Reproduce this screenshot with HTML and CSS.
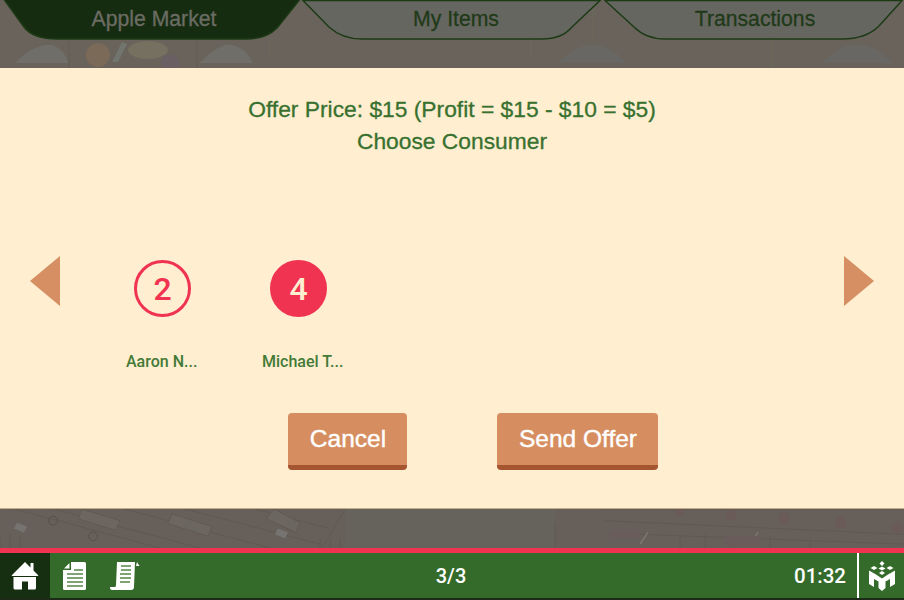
FILE: index.html
```html
<!DOCTYPE html>
<html lang="en">
<head>
    <meta charset="UTF-8">
    <title>Apple Market</title>
    <link rel="stylesheet" href="styles.css">
</head>
<body>
    <div class="screen">
        <div class="top-band">
            <!-- faded market stall behind the tabs -->
            <svg class="scenery" viewBox="0 0 904 68" preserveAspectRatio="none">
                <path d="M15 63Q30 47 45 45H52Q62 47 69 63Z" fill="#706e69"/>
                <path d="M200 63Q215 47 226 45H232Q245 47 253 63Z" fill="#706e69"/>
                <path d="M558 63Q575 46 590 45H596Q612 47 627 63Z" fill="#696763"/>
                <path d="M822 63Q840 46 852 45H860Q878 47 892 63Z" fill="#696763"/>
                <circle cx="98" cy="55" r="12" fill="#7c6a58"/>
                <path d="M112 62L122 42L127 44L118 62Z" fill="#72756d"/>
                <ellipse cx="148" cy="50" rx="20" ry="9" fill="#75705f"/>
                <circle cx="170" cy="63" r="9" fill="#6a5f63"/>
                <path d="M69 40V68M197 40V68" stroke="#625d55" stroke-width="1"/>
                <path d="M270 40V56M531 0V56M593 0V40M772 0V68" stroke="#6d6a58" stroke-width="1"/>
            </svg>
            <nav class="tabs">
                <a class="tab tab-active">
                    <svg class="tab-shape" viewBox="0 0 304 40"><path d="M3 -2L24 27Q33 39 57 39H247Q266 39 277 28L301 -2Z"/></svg>
                    <span class="tab-label">Apple Market</span>
                </a>
                <a class="tab">
                    <svg class="tab-shape" viewBox="0 0 304 40"><path d="M1 0.5H298L270 27Q260 39 240 39H60Q40 39 27 27Z"/></svg>
                    <span class="tab-label">My Items</span>
                </a>
                <a class="tab">
                    <svg class="tab-shape" viewBox="0 0 304 40"><path d="M1 0.5H298L275 26Q262 39 238 39H61Q42 39 30 27Z"/></svg>
                    <span class="tab-label">Transactions</span>
                </a>
            </nav>
        </div>

        <main class="dialog">
            <div class="dialog-title">
                <p>Offer Price: $15 (Profit = $15 - $10 = $5)</p>
                <p>Choose Consumer</p>
            </div>
            <div class="picker">
                <div class="arrow arrow-left"></div>
                <ul class="consumers">
                    <li class="consumer">
                        <span class="badge">2</span>
                        <span class="consumer-name">Aaron N...</span>
                    </li>
                    <li class="consumer">
                        <span class="badge badge-on">4</span>
                        <span class="consumer-name">Michael T...</span>
                    </li>
                </ul>
                <div class="arrow arrow-right"></div>
            </div>
            <div class="actions">
                <button class="btn btn-cancel">Cancel</button>
                <button class="btn btn-send">Send Offer</button>
            </div>
        </main>

        <div class="bottom-band">
            <!-- faded wooden planks -->
            <svg class="scenery" viewBox="0 0 904 40" preserveAspectRatio="none">
                <path d="M345 0H555V40H345Z" fill="#66635c"/>
                <g fill="none" stroke="#5f5952" stroke-width="1">
                    <path d="M0 -4L160 40M40 -4L200 40M110 -4L270 40M170 -4L320 36M240 -4L330 20M345 0L322 40"/>
                    <path d="M0 28V40M10 26V40M20 28V40M320 30V40M330 30V40M340 30V40"/>
                    <path d="M555 14V40M600 0H904M605 12L904 26M640 26L904 36M680 26V40M705 26V40M730 28V40M770 28V40M810 30V40"/>
                </g>
                <g fill="#6c6660" stroke="#5f5952">
                    <path d="M82 0L120 12L116 22L78 10Z"/>
                    <path d="M172 5L212 18L208 28L168 15Z"/>
                    <path d="M274 0L300 14L296 24L266 10Z"/>
                </g>
                <path d="M17 14L27 18L24 24L14 20Z M278 20L288 24L285 30L275 26Z" fill="#767470"/>
                <path d="M640 36L648 24M750 36L758 24" stroke="#7d7671" stroke-width="1.5"/>
                <path d="M610 22H640V30H610Z M725 28H760V38H725Z" fill="#6a5c5b"/>
                <g fill="none" stroke="#55504a">
                    <circle cx="53" cy="12" r="4.5"/>
                    <circle cx="93" cy="28" r="4.5"/>
                </g>
                <g fill="#6a5b58">
                    <circle cx="679" cy="3" r="5"/>
                    <circle cx="731" cy="6" r="6"/>
                    <circle cx="784" cy="9" r="6"/>
                    <circle cx="841" cy="14" r="6"/>
                    <circle cx="897" cy="19" r="6"/>
                </g>
            </svg>
        </div>

        <footer class="statusbar">
            <div class="nav-icons">
                <a class="nav-icon nav-icon-home">
                    <svg width="28" height="30" viewBox="0 0 28 30"><path fill="#fff" d="M14 1L19.500 6.500V2H22.500V9.500L27.500 14.500L26.500 15H1.500L0.500 14.500ZM2.500 16H25V27Q25 28.500 23.500 28.500H17V20.500H11V28.500H4Q2.500 28.500 2.500 27Z"/></svg>
                </a>
                <a class="nav-icon">
                    <svg width="24" height="30" viewBox="0 0 24 30"><path fill="#fff" d="M8 1H21.500Q23 1 23 2.500V27.500Q23 29 21.500 29H1.500Q0 29 0 27.500V9H8Z"/><path fill="#fff" d="M6.500 2V7.500H1Z"/><path stroke="#7fa374" stroke-width="2" d="M11 9H20M4 13H20M4 17H20M4 21H20M4 25H20"/></svg>
                </a>
                <a class="nav-icon">
                    <svg width="30" height="30" viewBox="0 0 30 30"><path fill="#fff" d="M7 1H25L24 26Q24 29 21 29H2Q0 29 0 26H5Q6 26 6 24Z"/><path fill="#fff" d="M26 5L27 1L29.500 5Z"/><path stroke="#7fa374" stroke-width="2" d="M11 5H21M11 9H21M10 13H21M10 17H21M10 21H20"/></svg>
                </a>
            </div>
            <div class="page-count">3/3</div>
            <div class="clock">01:32</div>
            <div class="logo">
                <svg width="26" height="30" viewBox="0 0 26 30"><path fill="#fff" d="M13 0L15.500 2.500L13 5L10.500 2.500ZM5 5L8.500 7L5 9L1.500 7ZM21 5L24.500 7L21 9L17.500 7ZM13 5.500L16.500 7.500L13 9.500L9.500 7.500ZM13 10L16 12L13 14L10 12ZM0 9.500L7 13.500L13 17.500L19 13.500L26 9.500V23L21 26V18L16.500 20.500V27L13 30L9.500 27V20.500L5 18V26L0 23Z"/></svg>
            </div>
        </footer>
    </div>
</body>
</html>
```

FILE: styles.css
```css
* {
    box-sizing: border-box;
}

html, body {
    margin: 0;
    height: 100%;
    overflow: hidden;
}

body {
    font-family: 'Liberation Sans', Arial, sans-serif;
    background-color: #67615b;
}

.screen {
    display: flex;
    flex-direction: column;
    height: 600px;
}

/* Bandes de fond */
.top-band {
    position: relative;
    height: 68px;
    background-color: #69635c;
}

.bottom-band {
    position: relative;
    height: 40px;
    background-color: #67605a;
    border-top: 1px solid #c2ad90;
}

.scenery {
    position: absolute;
    top: 0;
    left: 0;
    width: 100%;
    height: 100%;
}

/* Onglets */
.tabs {
    position: relative;
    display: flex;
    height: 40px;
}

.tab {
    position: relative;
    display: flex;
    flex: none;
    justify-content: center;
    align-items: center;
    width: 302px;
    height: 40px;
    padding-bottom: 3px;
    font-size: 21.2px;
    -webkit-text-stroke: 0.3px;
    color: #1f3a18;
}

.tab:last-child {
    width: 296px;
}

.tab-shape {
    position: absolute;
    top: 0;
    left: 0;
    width: 304px;
    height: 40px;
}

.tab-shape path {
    fill: #666661;
    stroke: #1c3b15;
    stroke-width: 1.5;
}

.tab-active {
    color: #6b6c63;
}

.tab-active .tab-shape path {
    fill: #162c10;
}

.tab-label {
    position: relative;
    left: 3px;
}

/* Fenetre */
.dialog {
    display: flex;
    flex-direction: column;
    height: 440px;
    padding-top: 25px;
    background-color: #ffeecf;
    color: #38712f;
}

.dialog-title {
    height: 167px;
    text-align: center;
    font-size: 22.8px;
    line-height: 32px;
    -webkit-text-stroke: 0.3px;
}

.dialog-title p {
    margin: 0;
}

.picker {
    display: flex;
    align-items: flex-start;
    height: 153px;
    padding-left: 30px;
    padding-right: 30px;
}

.arrow {
    width: 0;
    height: 0;
    margin-top: -4px;
    border-top: 25px solid transparent;
    border-bottom: 25px solid transparent;
}

.arrow-left {
    border-right: 30px solid #d58f62;
}

.arrow-right {
    border-left: 30px solid #d58f62;
}

.consumers {
    display: flex;
    flex: 1;
    gap: 36px;
    margin: 0;
    padding: 0 0 0 66px;
    list-style: none;
}

.consumer {
    display: flex;
    flex-direction: column;
    align-items: flex-start;
    width: 100px;
}

.badge {
    display: flex;
    justify-content: center;
    align-items: center;
    width: 57px;
    height: 57px;
    margin-left: 8px;
    border: 3px solid #f03350;
    border-radius: 50%;
    font-family: Roboto, sans-serif;
    font-size: 32px;
    font-weight: 500;
    color: #f03350;
}

.badge-on {
    background-color: #f03350;
    color: #ffeecf;
}

.consumer-name {
    margin-top: 36px;
    font-family: Roboto, sans-serif;
    font-size: 16px;
    font-weight: 500;
    line-height: 18px;
    color: #437a38;
    white-space: nowrap;
}

.actions {
    display: flex;
    gap: 90px;
    padding-left: 288px;
}

.btn {
    height: 57px;
    padding: 0 0 0 1px;
    border: none;
    border-radius: 4px;
    border-bottom: 5px solid #a5552f;
    background-color: #d68e60;
    color: #fff;
    font-family: 'Liberation Sans', Arial, sans-serif;
    font-size: 24.500px;
    -webkit-text-stroke: 0.4px;
}

.btn-cancel {
    width: 119px;
}

.btn-send {
    width: 161px;
}

/* Barre du bas */
.statusbar {
    display: flex;
    align-items: center;
    height: 52px;
    border-top: 5px solid #f03350;
    border-bottom: 2px solid #1c2a17;
    background-color: #346b2a;
    color: #fff;
    font-family: Roboto, sans-serif;
}

.nav-icons {
    display: flex;
    align-items: center;
    width: 400px;
    height: 100%;
}

.nav-icon {
    display: flex;
    justify-content: center;
    align-items: center;
    width: 50px;
    height: 100%;
}

.nav-icon-home {
    background-color: #172f11;
}

.page-count {
    width: 102px;
    text-align: center;
    font-size: 20px;
    font-weight: 500;
}

.clock {
    margin-left: auto;
    padding-right: 11px;
    font-size: 20.500px;
    font-weight: 500;
}

.logo {
    display: flex;
    justify-content: center;
    align-items: center;
    width: 47px;
    height: 100%;
    border-left: 2px solid #fff;
}
```
